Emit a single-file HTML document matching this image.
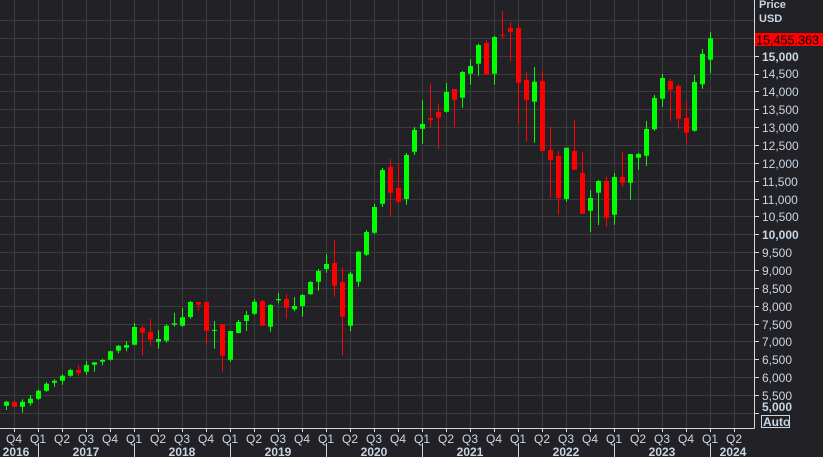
<!DOCTYPE html>
<html><head><meta charset="utf-8"><style>
html,body{margin:0;padding:0;background:#222126;}
svg{display:block;font-family:"Liberation Sans",sans-serif;}
</style></head><body>
<svg width="823" height="457" viewBox="0 0 823 457" xmlns="http://www.w3.org/2000/svg">
<rect width="823" height="457" fill="#222126"/>
<g stroke="#3b3b3e" stroke-width="1">
<path d="M14.5 0V428M38.5 0V428M62.5 0V428M86.5 0V428M110.5 0V428M134.5 0V428M158.5 0V428M182.5 0V428M206.5 0V428M230.5 0V428M254.5 0V428M278.5 0V428M302.5 0V428M326.5 0V428M350.5 0V428M374.5 0V428M398.5 0V428M422.5 0V428M446.5 0V428M470.5 0V428M494.5 0V428M518.5 0V428M542.5 0V428M566.5 0V428M590.5 0V428M614.5 0V428M638.5 0V428M662.5 0V428M686.5 0V428M710.5 0V428M734.5 0V428"/>
<path d="M0 20.5H754M0 38.5H754M0 56.5H754M0 74.5H754M0 91.5H754M0 109.5H754M0 127.5H754M0 145.5H754M0 163.5H754M0 181.5H754M0 199.5H754M0 216.5H754M0 234.5H754M0 252.5H754M0 270.5H754M0 288.5H754M0 306.5H754M0 324.5H754M0 341.5H754M0 359.5H754M0 377.5H754M0 395.5H754M0 413.5H754"/>
</g>
<g stroke="#00ff00" stroke-width="1" fill="none">
<path d="M6.5 400.7V410M22.5 399.3V412.7M30.5 395V405.7M38.5 389.3V400M46.5 382.3V391.7M54.5 379.3V386.7M62.5 374.3V384.7M70.5 368.7V376.7M86.5 361V374.7M94.5 362.3V371.7M102.5 358.7V365.3M110.5 350.7V360.7M118.5 345V353.3M126.5 341.3V351.3M134.5 323V345.3M158.5 330V348.7M166.5 324.3V342.7M174.5 312.7V326.7M182.5 308V326.7M190.5 301V318.7M214.5 321V348.7M230.5 331V361.7M238.5 320V333.3M246.5 311V330.7M254.5 299V315M270.5 304.3V331.7M278.5 293V303.3M294.5 297V311.3M302.5 294V316.7M310.5 281V294.7M318.5 269V290.7M326.5 254V272.7M350.5 271.7V331.3M358.5 250.7V286.7M366.5 230V255.7M374.5 204V234M382.5 168V207M406.5 153V204.7M414.5 127V155M422.5 100V143.7M446.5 83V112.7M462.5 71V107.7M470.5 59.3V84.7M478.5 43.7V75.7M494.5 35.7V84.7M534.5 67V142.7M566.5 147.7V201.7M590.5 190V232M598.5 180V225M614.5 173V224.7M630.5 154V199.7M638.5 153V169.7M646.5 121V166M654.5 95V130.7M662.5 74V106.7M694.5 75V131.7M702.5 49V88.7M710.5 32V73.3"/>
</g>
<g fill="#00ff00">
<path d="M4 401.7h5v4h-5zM20 401.7h5v5h-5zM28 398.7h5v4.6h-5zM36 390.7h5v8h-5zM44 383.7h5v7h-5zM52 380.7h5v2h-5zM60 375.7h5v5h-5zM68 370h5v5.7h-5zM84 365h5v6.7h-5zM92 362.3h5v2.4h-5zM100 360h5v1.7h-5zM108 351.3h5v8.4h-5zM116 345.7h5v5h-5zM124 345h5v2.7h-5zM132 327h5v17.7h-5zM156 339h5v2.7h-5zM164 325.7h5v15h-5zM172 323.3h5v1.4h-5zM180 317.3h5v8.4h-5zM188 302h5v15h-5zM212 330h5v1h-5zM228 331h5v28.7h-5zM236 322h5v11h-5zM244 315h5v6h-5zM252 301.7h5v12h-5zM268 305h5v21.7h-5zM276 299h5v1.3h-5zM292 306h5v3.3h-5zM300 295h5v11h-5zM308 282h5v12.3h-5zM316 271h5v10.7h-5zM324 264h5v5h-5zM348 273.7h5v52h-5zM356 251.7h5v30h-5zM364 232h5v22.7h-5zM372 207h5v25.7h-5zM380 170h5v33.7h-5zM404 155h5v44h-5zM412 130h5v21.7h-5zM420 124h5v4.7h-5zM444 92h5v19.7h-5zM460 72h5v25.7h-5zM468 66h5v7.7h-5zM476 45h5v18.7h-5zM492 37h5v36.7h-5zM532 81.7h5v20h-5zM564 147.7h5v51.3h-5zM588 198h5v12.7h-5zM596 181h5v11.7h-5zM612 177h5v37.7h-5zM628 154h5v28.7h-5zM636 154h5v3.7h-5zM644 129h5v26.7h-5zM652 98h5v31.3h-5zM660 78h5v20.7h-5zM692 82h5v48.7h-5zM700 54h5v30.3h-5zM708 38.3h5v21.4h-5z"/>
</g>
<g stroke="#ff0000" stroke-width="1" fill="none">
<path d="M78.5 364.7V375.7M142.5 325.7V355.7M150.5 319V345.7M198.5 302V310.7M206.5 302V345M222.5 324V371.7M262.5 300V325.7M286.5 294V318.7M334.5 240V296.7M342.5 267.3V355.7M390.5 159V215.7M398.5 163V204M430.5 83.7V127M438.5 104V149M454.5 89V126.7M486.5 40V74.7M502.5 10.7V38.7M510.5 22V61M518.5 24V123.7M526.5 72V141.7M542.5 70.7V151M550.5 126.7V198M558.5 150.7V215M574.5 120V169.7M582.5 152V213.7M606.5 176.7V226.7M622.5 152V186.7M670.5 79V121M678.5 84V128.7M686.5 101V143.7"/>
</g>
<g fill="#ff0000">
<path d="M12 401.7h5v5h-5zM76 370h5v2.7h-5zM140 327.7h5v5h-5zM148 332h5v7.7h-5zM196 302h5v2.7h-5zM204 302h5v28.7h-5zM220 324h5v31.7h-5zM260 301h5v24.7h-5zM284 299h5v8.7h-5zM332 263h5v22.7h-5zM340 282h5v34.7h-5zM388 167h5v25.7h-5zM396 188h5v13.7h-5zM428 118h5v1.7h-5zM436 112h5v5.7h-5zM452 89h5v10.7h-5zM484 43h5v31.7h-5zM500 34.7h5v1h-5zM508 28h5v3.7h-5zM516 28h5v54.7h-5zM524 80h5v19.7h-5zM540 81h5v70h-5zM548 150.3h5v9.4h-5zM556 156h5v42h-5zM572 151h5v18.7h-5zM580 173h5v40.7h-5zM604 181h5v36.7h-5zM620 177h5v5.7h-5zM668 81h5v8.7h-5zM676 86h5v32.7h-5zM684 118h5v14.7h-5z"/>
</g>
<path d="M754.5 0V428.5M0 428.5H754.5" stroke="#d8d8d8" stroke-width="1" fill="none"/>
<g stroke="#d8d8d8" stroke-width="1">
<path d="M754 56.5h5M754 74.5h5M754 91.5h5M754 109.5h5M754 127.5h5M754 145.5h5M754 163.5h5M754 181.5h5M754 199.5h5M754 216.5h5M754 234.5h5M754 252.5h5M754 270.5h5M754 288.5h5M754 306.5h5M754 324.5h5M754 341.5h5M754 359.5h5M754 377.5h5M754 395.5h5M754 413.5h5"/>
<path d="M14.5 428v4M38.5 428v4M62.5 428v4M86.5 428v4M110.5 428v4M134.5 428v4M158.5 428v4M182.5 428v4M206.5 428v4M230.5 428v4M254.5 428v4M278.5 428v4M302.5 428v4M326.5 428v4M350.5 428v4M374.5 428v4M398.5 428v4M422.5 428v4M446.5 428v4M470.5 428v4M494.5 428v4M518.5 428v4M542.5 428v4M566.5 428v4M590.5 428v4M614.5 428v4M638.5 428v4M662.5 428v4M686.5 428v4M710.5 428v4M734.5 428v4"/>
<path d="M38.5 443V457M134.5 443V457M230.5 443V457M326.5 443V457M422.5 443V457M518.5 443V457M614.5 443V457M710.5 443V457"/>
</g>
<g fill="#c9d6e3" font-size="12">
<text x="759" y="8" font-weight="bold" font-size="11">Price</text>
<text x="759" y="22" font-weight="bold" font-size="11">USD</text>
<text x="762" y="61" font-weight="bold">15,000</text>
<text x="762" y="78">14,500</text>
<text x="762" y="96">14,000</text>
<text x="762" y="114">13,500</text>
<text x="762" y="132">13,000</text>
<text x="762" y="150">12,500</text>
<text x="762" y="168">12,000</text>
<text x="762" y="186">11,500</text>
<text x="762" y="204">11,000</text>
<text x="762" y="221">10,500</text>
<text x="762" y="239" font-weight="bold">10,000</text>
<text x="762" y="257">9,500</text>
<text x="762" y="275">9,000</text>
<text x="762" y="293">8,500</text>
<text x="762" y="311">8,000</text>
<text x="762" y="329">7,500</text>
<text x="762" y="346">7,000</text>
<text x="762" y="364">6,500</text>
<text x="762" y="382">6,000</text>
<text x="762" y="400">5,500</text>
<text x="762" y="411" font-weight="bold">5,000</text>
</g>
<rect x="755" y="33" width="68" height="13" fill="#ff0000"/>
<text x="756" y="44.5" font-size="13" fill="#000" textLength="63" lengthAdjust="spacingAndGlyphs">15,455.363</text>
<rect x="761.5" y="415.5" width="28" height="12" fill="none" stroke="#c9d6e3"/>
<text x="763" y="426" font-size="12" font-weight="bold" fill="#c9d6e3">Auto</text>
<g fill="#c9d6e3" font-size="12" text-anchor="middle">
<text x="14" y="443">Q4</text><text x="38" y="443">Q1</text><text x="62" y="443">Q2</text><text x="86" y="443">Q3</text><text x="110" y="443">Q4</text>
<text x="134" y="443">Q1</text><text x="158" y="443">Q2</text><text x="182" y="443">Q3</text><text x="206" y="443">Q4</text>
<text x="230" y="443">Q1</text><text x="254" y="443">Q2</text><text x="278" y="443">Q3</text><text x="302" y="443">Q4</text>
<text x="326" y="443">Q1</text><text x="350" y="443">Q2</text><text x="374" y="443">Q3</text><text x="398" y="443">Q4</text>
<text x="422" y="443">Q1</text><text x="446" y="443">Q2</text><text x="470" y="443">Q3</text><text x="494" y="443">Q4</text>
<text x="518" y="443">Q1</text><text x="542" y="443">Q2</text><text x="566" y="443">Q3</text><text x="590" y="443">Q4</text>
<text x="614" y="443">Q1</text><text x="638" y="443">Q2</text><text x="662" y="443">Q3</text><text x="686" y="443">Q4</text>
<text x="710" y="443">Q1</text><text x="734" y="443">Q2</text>
</g>
<g fill="#c9d6e3" font-size="12" font-weight="bold" text-anchor="middle">
<text x="16" y="456">2016</text><text x="86" y="456">2017</text><text x="182" y="456">2018</text><text x="278" y="456">2019</text>
<text x="374" y="456">2020</text><text x="470" y="456">2021</text><text x="566" y="456">2022</text><text x="662" y="456">2023</text><text x="733" y="456">2024</text>
</g>
</svg>
</body></html>
